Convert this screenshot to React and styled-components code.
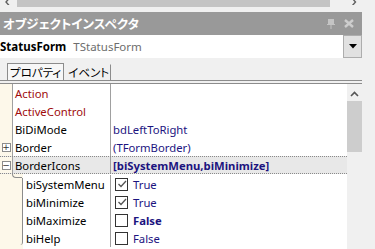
import React from 'react';
import styled, { createGlobalStyle } from 'styled-components';

const GlobalStyle = createGlobalStyle`
  html, body {
    margin: 0;
    padding: 0;
    background: #f0f0f0;
  }
  body {
    font-family: "Noto Sans", "Noto Sans CJK JP", sans-serif;
  }
`;

const jp = `"Noto Sans CJK JP", "Noto Sans", sans-serif`;

const props = [
  { name: 'Action', value: '', ref: true },
  { name: 'ActiveControl', value: '', ref: true },
  { name: 'BiDiMode', value: 'bdLeftToRight' },
  { name: 'Border', value: '(TFormBorder)', expand: 'plus' },
];

const subProps = [
  { name: 'biSystemMenu', checked: true, value: 'True' },
  { name: 'biMinimize', checked: true, value: 'True' },
  { name: 'biMaximize', checked: false, value: 'False', bold: true },
  { name: 'biHelp', checked: false, value: 'False' },
];

export default function App() {
  return (
    <>
      <GlobalStyle />
      <HScroll>
        <StripArrow viewBox="0 0 8 5" $ml={3}>
          <path d="M6.5 -2 L3 2 L6.5 6" fill="none" stroke="#606060" strokeWidth="1.4" />
        </StripArrow>
        <HThumb />
        <StripArrow viewBox="0 0 8 5" $ml={20}>
          <path d="M2 -2 L5.5 2 L2 6" fill="none" stroke="#606060" strokeWidth="1.4" />
        </StripArrow>
      </HScroll>
      <Inspector>
        <TitleBar>
          <Title>オブジェクトインスペクタ</Title>
          <TitleIcons>
            <svg width="8" height="10" viewBox="0 0 8 10">
              <rect x="1" y="0" width="6" height="5" fill="#c4c4c4" />
              <rect x="0" y="5" width="8" height="1" fill="#c4c4c4" />
              <rect x="3.5" y="6" width="1" height="4" fill="#c4c4c4" />
            </svg>
            <svg width="10" height="9" viewBox="0 0 10 9">
              <path d="M1 1 L9 8 M9 1 L1 8" stroke="#cdcdcd" strokeWidth="2.4" />
            </svg>
          </TitleIcons>
        </TitleBar>
        <Selector>
          <SelectorField>
            <ObjName>StatusForm</ObjName>
            <ObjType>TStatusForm</ObjType>
          </SelectorField>
          <DropButton>
            <svg width="8" height="5" viewBox="0 0 8 5">
              <path d="M0 0 H8 L4 4.5 Z" fill="#000" />
            </svg>
          </DropButton>
        </Selector>
        <TabStrip>
          <Tab $active>プロパティ</Tab>
          <Tab>イベント</Tab>
        </TabStrip>
        <GridWrap>
          <Grid>
            {props.map((p) => (
              <Row key={p.name}>
                <Gutter>{p.expand && <ExpandBox>+</ExpandBox>}</Gutter>
                <NameCell $ref={p.ref}>{p.name}</NameCell>
                <ValueCell>{p.value}</ValueCell>
              </Row>
            ))}
            <Row $selected>
              <Gutter>
                <ExpandBox>−</ExpandBox>
              </Gutter>
              <NameCell>BorderIcons</NameCell>
              <ValueCell $bold>[biSystemMenu,biMinimize]</ValueCell>
            </Row>
            <SubGroup>
              <SubGutter>
                <BracketHook />
                <BracketStem />
              </SubGutter>
              <SubRows>
                {subProps.map((s) => (
                  <SubRow key={s.name}>
                    <SubName>{s.name}</SubName>
                    <ValueCell $bold={s.bold}>
                      <CheckBox>
                        {s.checked && (
                          <svg width="10" height="10" viewBox="0 0 10 10">
                            <path d="M1.5 5 L4 7.5 L9 2" fill="none" stroke="#555" strokeWidth="1.3" />
                          </svg>
                        )}
                      </CheckBox>
                      {s.value}
                    </ValueCell>
                  </SubRow>
                ))}
              </SubRows>
            </SubGroup>
          </Grid>
          <VScroll>
            <UpArrow viewBox="0 0 9 6">
              <path d="M1 5 L4.5 1.5 L8 5" fill="none" stroke="#555" strokeWidth="1.6" />
            </UpArrow>
            <VThumb />
          </VScroll>
        </GridWrap>
      </Inspector>
    </>
  );
}

const HScroll = styled('div')`
  height: 12px;
  display: flex;
  align-items: flex-start;
  background: #f0f0f0;
`;

const StripArrow = styled('svg')`
  width: 8px;
  height: 5px;
  flex-shrink: 0;
  margin-left: ${(p) => p.$ml}px;
`;

const HThumb = styled('div')`
  width: 313px;
  height: 7px;
  flex-shrink: 0;
  margin-left: 6px;
  background: #c4c4c4;
`;

const Inspector = styled('div')`
  width: 362px;
  height: 237px;
  display: flex;
  flex-direction: column;
  overflow: hidden;
`;

const TitleBar = styled('div')`
  height: 23px;
  flex-shrink: 0;
  background: #999999;
  display: flex;
  align-items: center;
  justify-content: space-between;
  padding: 0 8px 0 3px;
`;

const Title = styled('span')`
  font-family: ${jp};
  font-size: 12.5px;
  font-weight: 700;
  color: #ffffff;
  font-feature-settings: 'palt';
`;

const TitleIcons = styled('div')`
  display: flex;
  align-items: center;
  gap: 9px;
`;

const Selector = styled('div')`
  height: 23px;
  flex-shrink: 0;
  display: flex;
  background: #ffffff;
`;

const SelectorField = styled('div')`
  flex: 1;
  display: flex;
  align-items: center;
  gap: 7px;
  font-size: 11.5px;
`;

const ObjName = styled('span')`
  font-weight: 700;
  color: #000;
`;

const ObjType = styled('span')`
  color: #6d6d6d;
`;

const DropButton = styled('div')`
  width: 19px;
  box-sizing: border-box;
  border: 1px solid #adadad;
  background: #e1e1e1;
  display: flex;
  align-items: center;
  justify-content: center;
`;

const TabStrip = styled('div')`
  height: 23px;
  flex-shrink: 0;
  box-sizing: border-box;
  padding: 5px 0 0 7px;
  display: flex;
  align-items: stretch;
  border-bottom: 1px solid #8c8c8c;
`;

const Tab = styled('div')`
  font-family: ${jp};
  font-size: 11.5px;
  font-feature-settings: 'palt';
  color: #000;
  display: flex;
  align-items: center;
  padding: 0 2px;
  border: 1px solid ${(p) => (p.$active ? '#8c8c8c' : 'transparent')};
  border-bottom: none;
  background: ${(p) => (p.$active ? '#f7f7f7' : 'transparent')};
  & + & {
    border-right: 1px solid #8c8c8c;
    height: 15px;
    align-self: center;
    padding: 0 1px 0 3px;
  }
`;

const GridWrap = styled('div')`
  flex: 1;
  display: flex;
  margin-top: 2px;
  border-top: 1px solid #8c8c8c;
  min-height: 0;
  background: #ffffff;
`;

const Grid = styled('div')`
  flex: 1;
  display: flex;
  flex-direction: column;
  font-size: 11.3px;
  background: #ffffff;
`;

const Row = styled('div')`
  height: 18px;
  flex-shrink: 0;
  display: grid;
  grid-template-columns: 13px 98px 1fr;
  box-sizing: border-box;
  background: ${(p) => (p.$selected ? '#e8e8e8' : '#ffffff')};
  border-top: ${(p) => (p.$selected ? '1px dotted #8a8a8a' : 'none')};
  border-bottom: ${(p) => (p.$selected ? '1px dotted #8a8a8a' : 'none')};
`;

const Gutter = styled('div')`
  background: #fdf8ea;
  border-right: 1px solid #a0a0a0;
  display: flex;
  align-items: center;
  justify-content: center;
`;

const ExpandBox = styled('span')`
  width: 9px;
  height: 9px;
  box-sizing: border-box;
  border: 1px solid #8c8c8c;
  background: #ffffff;
  color: #333;
  font-size: 9px;
  line-height: 6px;
  display: flex;
  align-items: center;
  justify-content: center;
  font-family: "DejaVu Sans", sans-serif;
`;

const NameCell = styled('div')`
  border-right: 1px solid #a0a0a0;
  padding-left: 2px;
  display: flex;
  align-items: center;
  color: ${(p) => (p.$ref ? '#a00c0c' : '#000')};
  white-space: nowrap;
  overflow: hidden;
`;

const ValueCell = styled('div')`
  padding-left: 2px;
  display: flex;
  align-items: center;
  color: #1c147f;
  font-weight: ${(p) => (p.$bold ? 700 : 400)};
  white-space: nowrap;
  overflow: hidden;
`;

const SubGroup = styled('div')`
  flex: 1;
  display: flex;
`;

const SubGutter = styled('div')`
  width: 23px;
  background: #fdf8ea;
  display: flex;
  flex-direction: column;
  padding-bottom: 4px;
  box-sizing: border-box;
`;

const BracketHook = styled('div')`
  margin-left: 12px;
  width: 10px;
  height: 4px;
  border-left: 1px solid #8c8c8c;
  border-bottom: 1px solid #8c8c8c;
  border-bottom-left-radius: 5px;
  box-sizing: border-box;
`;

const BracketStem = styled('div')`
  flex: 1;
  margin-left: 19px;
  border-right: 1px solid #8c8c8c;
  border-bottom-right-radius: 3px;
  box-sizing: border-box;
`;

const SubRows = styled('div')`
  flex: 1;
  display: flex;
  flex-direction: column;
  padding-top: 1px;
`;

const SubRow = styled('div')`
  height: 18px;
  display: grid;
  grid-template-columns: 88px 1fr;
`;

const SubName = styled('div')`
  border-right: 1px solid #a0a0a0;
  padding-left: 3px;
  display: flex;
  align-items: center;
  color: #000;
  white-space: nowrap;
  overflow: hidden;
`;

const CheckBox = styled('span')`
  width: 13px;
  height: 13px;
  box-sizing: border-box;
  border: 1px solid #333;
  background: #fff;
  margin: 0 5px 0 2px;
  display: flex;
  align-items: center;
  justify-content: center;
`;

const VScroll = styled('div')`
  width: 15px;
  background: #f0f0f0;
  display: flex;
  flex-direction: column;
  align-items: center;
  padding-top: 7px;
`;

const UpArrow = styled('svg')`
  width: 9px;
  height: 6px;
  margin-bottom: 4px;
`;

const VThumb = styled('div')`
  width: 15px;
  height: 51px;
  background: #cdcdcd;
`;
